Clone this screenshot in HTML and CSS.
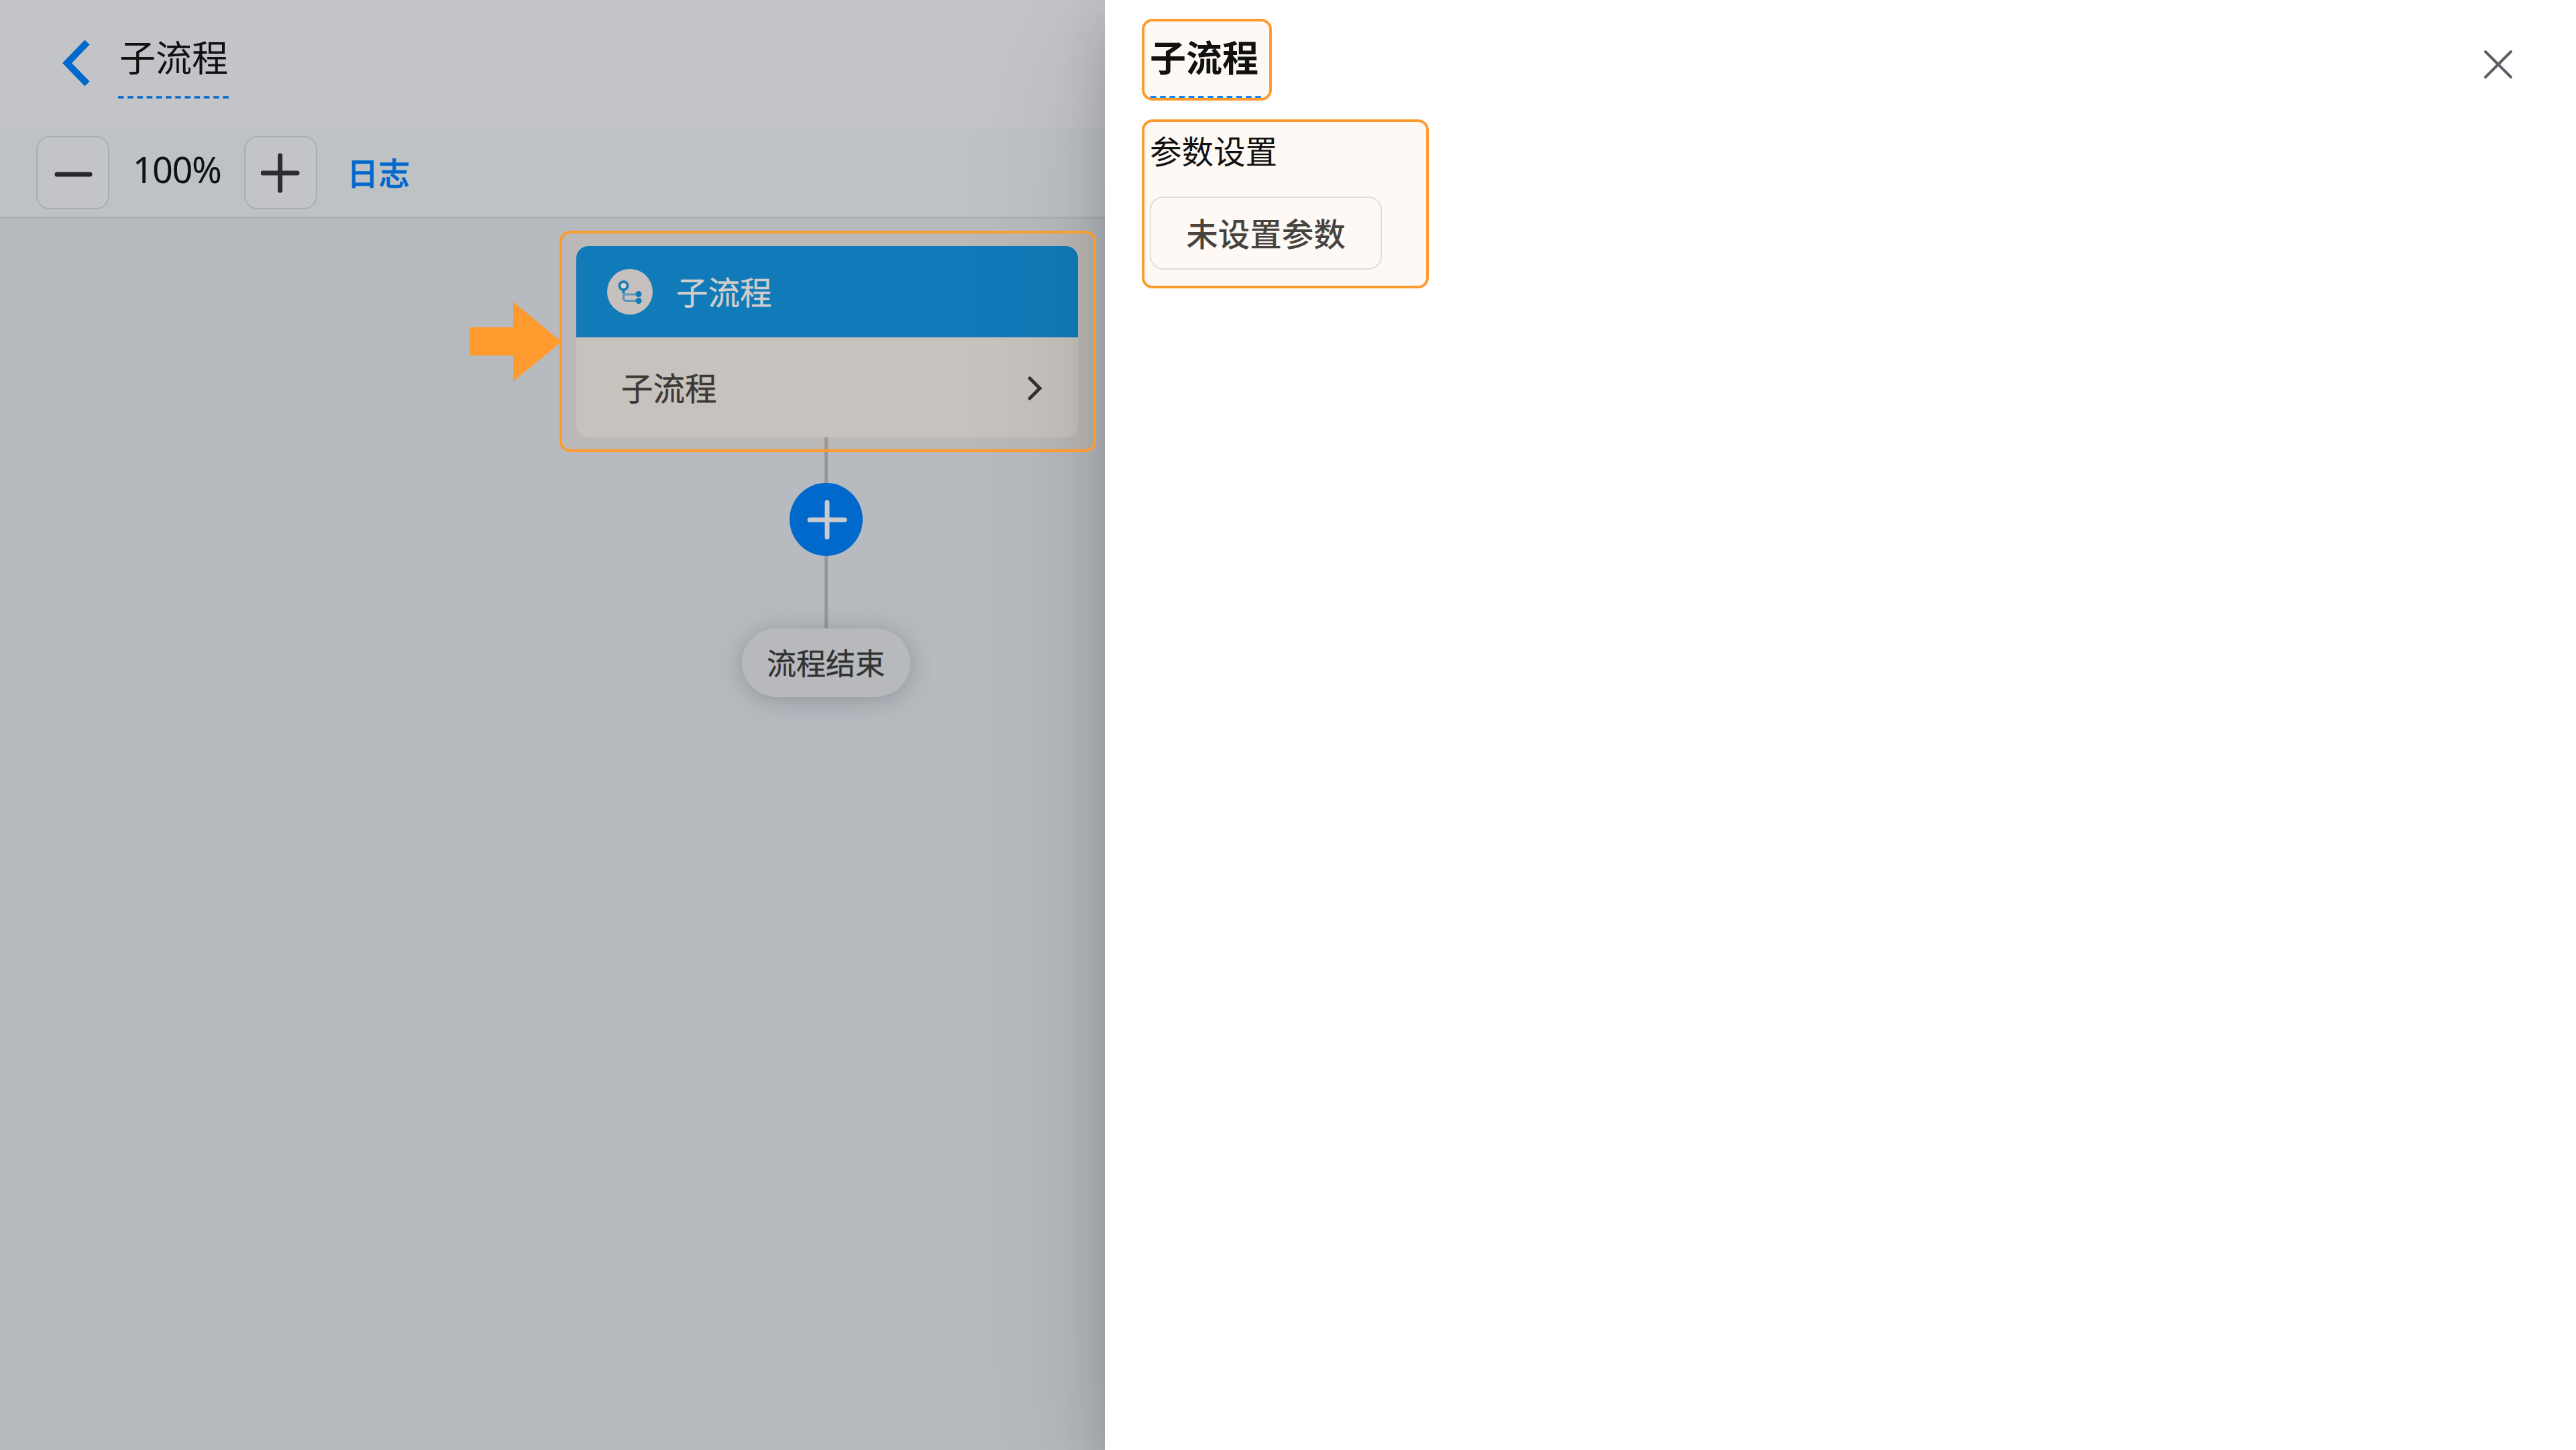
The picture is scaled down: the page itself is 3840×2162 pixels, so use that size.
FILE: index.html
```html
<!DOCTYPE html>
<html lang="zh-CN">
<head>
    <meta charset="UTF-8">
    <title>子流程</title>
    <link rel="stylesheet" href="styles.css">
</head>
<body>

    <div class="editor">
        <header class="header">
            <svg class="back" width="42" height="70" viewBox="0 0 42 70">
                <path d="M38 4 L8 35 L38 66" fill="none" stroke="#0069cb" stroke-width="10"/>
            </svg>
            <div class="title">子流程
                <svg class="dashes" width="165" height="4"><path d="M0 2H165" stroke="#0069cb" stroke-width="3.500" stroke-dasharray="8.6 5.6"/></svg>
            </div>
        </header>

        <div class="toolbar">
            <button class="zoom-btn">
                <svg width="60" height="60" viewBox="0 0 60 60"><path d="M6 32H55" stroke="#26282c" stroke-width="7" stroke-linecap="round"/></svg>
            </button>
            <span class="zoom-value">100%</span>
            <button class="zoom-btn">
                <svg width="60" height="60" viewBox="0 0 60 60"><path d="M3 30H54M28.500 4V56" stroke="#2b2d31" stroke-width="7" stroke-linecap="round"/></svg>
            </button>
            <a class="log-link">日志</a>
        </div>

        <main class="canvas">
            <div class="flow">
                <div class="node">
                    <div class="node-head">
                        <svg class="node-icon" width="68" height="68" viewBox="0 0 68 68">
                            <circle cx="34" cy="34" r="34" fill="#c3c4c8"/>
                            <path d="M24.500 32V43Q24.500 47.500 29 47.500H46M25 38H46" fill="none" stroke="#4b97c3" stroke-width="3.200"/>
                            <circle cx="24.500" cy="25" r="6" fill="#dfd6d2" stroke="#127dbb" stroke-width="4"/>
                            <path d="M24.500 31V36" stroke="#127dbb" stroke-width="4"/>
                            <circle cx="47" cy="37.500" r="4.500" fill="#037ac3"/>
                            <circle cx="47" cy="47.500" r="4.500" fill="#037ac3"/>
                        </svg>
                        <span>子流程</span>
                    </div>
                    <div class="node-body">
                        <span>子流程</span>
                        <svg width="24" height="38" viewBox="0 0 24 38"><path d="M4 4L19 19L4 34" fill="none" stroke="#2b2a2a" stroke-width="5" stroke-linecap="round"/></svg>
                    </div>
                </div>
                <div class="line line-top"></div>
                <button class="add-btn">
                    <svg width="64" height="64" viewBox="0 0 64 64"><path d="M8 32H60M34 6V58" stroke="#c9cacd" stroke-width="7" stroke-linecap="round"/></svg>
                </button>
                <div class="line line-bottom"></div>
                <div class="end">流程结束</div>
            </div>
        </main>
    </div>

    <aside class="drawer">
        <section class="marked drawer-title">
            <h1>子流程</h1>
            <svg class="dashes" width="165" height="3"><path d="M0 1.500H165" stroke="#1684ee" stroke-width="3" stroke-dasharray="8.600 5.600"/></svg>
        </section>
        <section class="marked params">
            <h2>参数设置</h2>
            <button class="param-btn">未设置参数</button>
        </section>
        <svg class="close" width="44" height="44" viewBox="0 0 44 44"><path d="M3 3L41 41M41 3L3 41" stroke="#5c5f65" stroke-width="4" stroke-linecap="round"/></svg>
    </aside>

    <!-- callout on the node -->
    <div class="callout"></div>
    <svg class="arrow" width="137" height="120" viewBox="0 0 137 120"><path d="M0 38H65V0L137 59.500L65 118.500V80H0Z" fill="#ff9a2e"/></svg>

</body>
</html>
```
FILE: styles.css
```css
* {
    box-sizing: border-box;
}
body {
    margin: 0;
    width: 3840px;
    height: 2162px;
    display: flex;
    position: relative;
    overflow: hidden;
    background: #fff;
    font-family: "Noto Sans CJK SC", sans-serif;
    color: #111;
}
svg {
    display: block;
    flex-shrink: 0;
}
button {
    padding: 0;
    font-family: inherit;
    display: flex;
    align-items: center;
    justify-content: center;
    flex-shrink: 0;
}
.editor {
    width: 1647px;
    display: flex;
    flex-direction: column;
    background: #b7bbc0;
}
.header {
    height: 191px;
    display: flex;
    align-items: flex-start;
    padding: 44px 0 0 92px;
    background: #c3c4c8;
}
.back {
    margin-top: 15px;
}
.title {
    position: relative;
    margin-left: 42px;
    width: 165px;
    height: 103px;
    padding-left: 2px;
    font-size: 54px;
    line-height: 80px;
}
.dashes {
    position: absolute;
    left: 0;
    bottom: 0;
}
.toolbar {
    height: 135px;
    display: flex;
    align-items: center;
    padding: 1px 0 0 54px;
    background: #bec2c5;
    border-bottom: 3px solid #adb0b4;
}
.zoom-btn {
    width: 109px;
    height: 109px;
    background: #c3c4c8;
    border: 2px solid #a9adb7;
    border-radius: 20px;
}
.zoom-value {
    width: 201px;
    padding-bottom: 11px;
    text-align: center;
    font-family: "Noto Sans", sans-serif;
    font-size: 54px;
    letter-spacing: -1.5px;
}
.log-link {
    margin-left: 44px;
    padding-bottom: 4px;
    font-size: 47px;
    font-weight: 500;
    -webkit-text-stroke: 0.5px #0069cb;
    color: #0069cb;
}
.canvas {
    flex: 1;
    padding: 41px 0 0 859px;
}
.flow {
    width: 744px;
    display: flex;
    flex-direction: column;
    align-items: center;
}
.node {
    align-self: flex-start;
    width: 748px;
    height: 285px;
    border-radius: 18px;
    overflow: hidden;
    background: #c3c5c7;
    font-size: 47.5px;
}
.node span {
    position: relative;
    top: -2px;
    -webkit-text-stroke: 0.4px;
}
.node-head {
    height: 136px;
    display: flex;
    align-items: center;
    gap: 35px;
    padding-left: 46px;
    background: #037ac3;
    color: #d0d1d4;
}
.node-body {
    height: 149px;
    display: flex;
    align-items: center;
    justify-content: space-between;
    padding: 2px 52px 0 67px;
    color: #313234;
}
.line {
    width: 5px;
    background: #96989b;
}
.line-top {
    height: 68px;
}
.line-bottom {
    height: 108px;
}
.add-btn {
    width: 109px;
    height: 109px;
    border: 0;
    border-radius: 50%;
    background: #0069cb;
}
.end {
    width: 251px;
    height: 102px;
    border-radius: 51px;
    background: #b8b9bc;
    box-shadow: 0 4px 36px rgba(60, 65, 70, 0.32);
    font-size: 44px;
    line-height: 100px;
    text-align: center;
    color: #313234;
    -webkit-text-stroke: 0.4px;
}
.drawer {
    flex: 1;
    position: relative;
    padding: 28px 0 0 55px;
    background: #fff;
    box-shadow: 0 60px 200px rgba(0, 0, 0, 0.14), 0 30px 70px rgba(0, 0, 0, 0.15);
}
.marked {
    position: relative;
    border: 4px solid #ff9a2e;
    border-radius: 16px;
    background: #fef9f4;
}
.drawer-title {
    width: 194px;
    height: 122px;
    padding: 12px 0 0 8px;
}
.drawer-title .dashes {
    left: 9px;
}
h1 {
    margin: 0;
    font-size: 54px;
    line-height: 80px;
    font-weight: 700;
}
.params {
    width: 428px;
    height: 252px;
    margin-top: 28px;
    padding: 7px 0 0 8px;
}
h2 {
    margin: 0;
    font-size: 47.5px;
    line-height: 70px;
    font-weight: 400;
}
.param-btn {
    margin-top: 34px;
    padding-bottom: 2px;
    width: 346px;
    height: 109px;
    background: transparent;
    border: 2px solid #dfdedf;
    border-radius: 20px;
    font-size: 47.5px;
    font-weight: 500;
    color: #47433f;
}
.close {
    position: absolute;
    top: 74px;
    right: 94px;
}
.callout {
    position: absolute;
    left: 834px;
    top: 344px;
    width: 800px;
    height: 330px;
    border: 4px solid #ff9a2e;
    border-radius: 16px;
    background: rgba(255, 154, 46, 0.06);
}
.arrow {
    position: absolute;
    left: 700px;
    top: 450px;
}
```
